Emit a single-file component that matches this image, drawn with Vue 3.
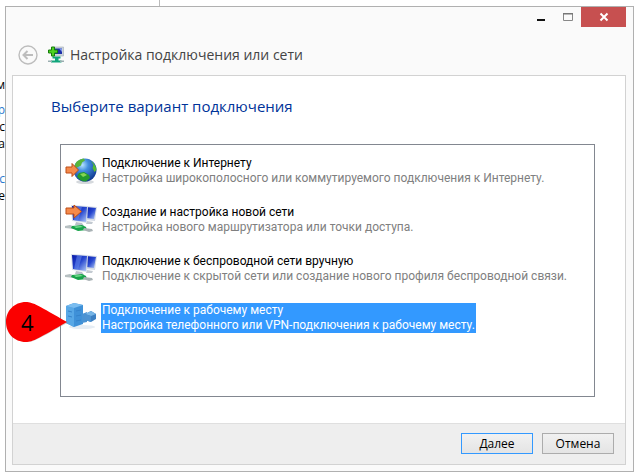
<template>
  <div class="desktop">
    <div class="backdrop" aria-hidden="true">
      <span v-for="(line, i) in backdrop" :key="i" :class="['scrap', line.kind]">{{ line.text }}</span>
    </div>
    <div class="backdrop-line"></div>

    <main class="window">
      <div class="caption">
        <button class="cap-btn" aria-label="Свернуть">
          <svg width="12" height="12" viewBox="0 0 12 12"><path d="M2 8h8v2H2z" fill="#111" /></svg>
        </button>
        <button class="cap-btn" aria-label="Развернуть">
          <svg width="12" height="12" viewBox="0 0 12 12">
            <path d="M1.500 2.500h9v7h-9z" fill="none" stroke="#888" />
            <path d="M1 2h10v1.500H1z" fill="#777" />
          </svg>
        </button>
        <button class="cap-btn close" aria-label="Закрыть">
          <svg width="10" height="10" viewBox="0 0 10 10"><path d="M1.500 1.500l7 7M8.500 1.500l-7 7" stroke="#fff" stroke-width="2" /></svg>
        </button>
      </div>

      <header class="title-row">
        <button class="back" aria-label="Назад">
          <svg width="20" height="20" viewBox="0 0 20 20" fill="none" stroke="#bdbdbd">
            <circle cx="10" cy="10" r="9" stroke-width="1.400" />
            <path d="M15 10H6M9.500 6L5.500 10l4 4" stroke-width="2" />
          </svg>
        </button>
        <svg class="title-icon" width="16" height="18" viewBox="0 0 16 18">
          <path d="M6 1h9.500v9H4V7z" fill="#cdd5dc" stroke="#a3acb5" stroke-width=".6" />
          <path d="M7 2.500h7V8H5V7z" fill="#1d2fa8" />
          <path d="M11 2.500h3V6z" fill="#7d95ea" />
          <path d="M4.500 10.500h8v2h-2v2h3v2H3v-2h4v-2H4.500z" fill="#11a67c" />
          <path d="M0 14.500h4v1.500H0zM12 14.500h4v1.500h-4z" fill="#9aaeb0" />
          <path d="M3.500 1h3v3h3v3h-3v3h-3V7h-3V4h3z" fill="#4ed321" stroke="#167d0c" />
        </svg>
        <h1>Настройка подключения или сети</h1>
      </header>

      <section class="panel">
        <div class="content">
          <h2 id="choice-title">Выберите вариант подключения</h2>
          <div class="list" role="listbox" aria-labelledby="choice-title">
            <button
              v-for="opt in options"
              :key="opt.icon"
              :class="['option', { selected: selected === opt.icon }]"
              role="option"
              :aria-selected="selected === opt.icon"
              @click="selected = opt.icon"
            >
              <svg v-if="opt.icon === 'internet'" class="icon" viewBox="0 0 32 32">
                <defs>
                  <radialGradient id="globe" cx="38%" cy="28%" r="75%">
                    <stop offset="0" stop-color="#b8e4ff" />
                    <stop offset=".35" stop-color="#438fe0" />
                    <stop offset="1" stop-color="#10388f" />
                  </radialGradient>
                </defs>
                <ellipse cx="20" cy="27" rx="9" ry="2" fill="#d5d9dd" />
                <circle cx="20" cy="15" r="11.500" fill="url(#globe)" />
                <path d="M10 10c1-4 5-6 9-6.500l1 2-3 2-1 3-4 2-2 2z" fill="#58b53c" />
                <path d="M26 6c3 2 5 5 5.500 9l-2 2-2-4 1-3z" fill="#55bd31" />
                <path d="M14 18l5-1 5 3 1 3-4 3.500c-4 0-7-2-9-5z" fill="#239a2d" />
                <path d="M15 19l4-1 3 2-4 2z" fill="#86d552" />
                <path d="M1 12h6V8.500L13.500 15 7 21.500V18H1z" fill="#f58a4b" stroke="#bd4d17" />
              </svg>

              <svg v-else-if="opt.icon !== 'work'" class="icon" viewBox="0 0 32 32">
                <defs>
                  <linearGradient :id="'scr-' + opt.icon" x1="0" y1="0" x2="1" y2="1">
                    <stop offset="0" stop-color="#0718a8" />
                    <stop offset=".5" stop-color="#2747cf" />
                    <stop offset="1" stop-color="#b4cdf8" />
                  </linearGradient>
                </defs>
                <path d="M20 2l12 1-2 14-10-1z" fill="#d5dbe5" />
                <path d="M21 3l10 1-2 11-8-1z" :fill="`url(#scr-${opt.icon})`" />
                <path d="M22 17l6 1-1 2h-6z" fill="#c3cad1" />
                <path d="M6 1l17 1-1 17-15-2z" fill="#d9e0e9" />
                <path d="M7 2l15 1-1 15-13-2z" :fill="`url(#scr-${opt.icon})`" />
                <path d="M12 2.300l5 .4-4 14-4-.6z" fill="#6e91f1" opacity=".5" />
                <path d="M11 18l6 1 2 3-9-1z" fill="#b9c1c9" />
                <path d="M0 22l5-1 6 2-2 2-9-1z" fill="#b7c0c2" />
                <path d="M7 22l10-1 4 2 1 3-9 1-7-3z" fill="#17a34a" />
                <path d="M9 22.500l7-.5 2 1-7 1z" fill="#72dc8c" />
                <path d="M19 24l8 1 1 2-4 1-6-2z" fill="#a9b2b5" />
                <path
                  v-if="opt.icon === 'network'"
                  d="M1 4h8V1l7.500 6.500L9 14v-4H1z"
                  fill="#f58a4b"
                  stroke="#bd4d17"
                />
              </svg>

              <svg v-else class="icon" viewBox="0 0 32 32">
                <ellipse cx="17" cy="25" rx="13" ry="2" fill="#e6edf4" />
                <path d="M1 4l8-3 9 2v19l-9 3-8-4z" fill="#3f91d8" />
                <path d="M1 4l8 2v19l-8-4z" fill="#58a8e6" />
                <path d="M1 4l8-3 9 2-9 3z" fill="#7abdf0" />
                <path d="M11 9l5-1M11 14l5-1M11 19l5-1M3 9l4 1M3 14l4 1" stroke="#3583cb" />
                <path d="M17 12l5-2v10l-5 1z" fill="#4a93d4" />
                <path d="M20 12l6-3 5 3v5l-5 3-6-2z" fill="#3d80c2" />
                <path d="M20 12l6-3 5 3-5 2z" fill="#77b5e6" />
                <path d="M20 12l6 2v6l-6-2z" fill="#4d93d2" />
              </svg>

              <span class="text">
                <span class="name">{{ opt.name }}</span>
                <span class="hint">{{ opt.hint }}</span>
              </span>

              <span v-if="opt.icon === 'work'" class="marker">
                <svg viewBox="0 0 64 44">
                  <path d="M22 3C10 3 2 12 2 22s8 19 20 19c7 0 13-4 41-19.500C35 7 29 3 22 3z" fill="#999" opacity=".45" />
                  <path d="M21 1C9 1 1 10 1 21s8 20 20 20c7 0 13-4 41-20C34 5 28 1 21 1z" fill="#fb0000" />
                </svg>
                <span class="marker-num">4</span>
              </span>
            </button>
          </div>
        </div>

        <footer class="actions">
          <button class="btn primary">Далее</button>
          <button class="btn">Отмена</button>
        </footer>
      </section>
    </main>
  </div>
</template>

<script setup>
import { ref } from 'vue'

const selected = ref('work')

const options = [
  {
    icon: 'internet',
    name: 'Подключение к Интернету',
    hint: 'Настройка широкополосного или коммутируемого подключения к Интернету.',
  },
  {
    icon: 'network',
    name: 'Создание и настройка новой сети',
    hint: 'Настройка нового маршрутизатора или точки доступа.',
  },
  {
    icon: 'wireless',
    name: 'Подключение к беспроводной сети вручную',
    hint: 'Подключение к скрытой сети или создание нового профиля беспроводной связи.',
  },
  {
    icon: 'work',
    name: 'Подключение к рабочему месту',
    hint: 'Настройка телефонного или VPN-подключения к рабочему месту.',
  },
]

// ends of the lines showing from under the window
const backdrop = [
  { text: 'м', kind: 'gap' },
  { text: 'р', kind: 'link' },
  { text: 'с', kind: '' },
  { text: 'а', kind: 'gap-lg' },
  { text: 'с', kind: 'link' },
  { text: 'е', kind: '' },
]
</script>

<style>
body {
  margin: 0;
  background: #fff;
}
</style>

<style scoped>
*, *::before, *::after { box-sizing: border-box; }

.desktop {
  position: relative;
  display: flex;
  min-height: 100vh;
  padding: 6px 5px 1px;
  font-family: 'Open Sans', 'Noto Sans', sans-serif;
  font-size: 12px;
  color: #000;
}

button {
  font: inherit;
  color: inherit;
  margin: 0;
  padding: 0;
  border: 0;
  background: none;
  cursor: pointer;
}

svg { display: block; }

/* Backdrop */
.backdrop {
  position: absolute;
  top: 76px;
  left: 0;
  width: 5px;
  display: flex;
  flex-direction: column;
  align-items: flex-end;
  overflow: hidden;
  line-height: 17px;
}
.scrap.gap { margin-bottom: 8px; }
.scrap.gap-lg { margin-bottom: 18px; }
.scrap.link { color: #2a7ad0; }

.backdrop-line {
  position: absolute;
  top: 0;
  left: 159px;
  width: 1px;
  height: 6px;
  background: #bbb;
}

/* Window */
.window {
  position: relative;
  flex: 1;
  min-width: 0;
  display: flex;
  flex-direction: column;
  padding: 0 7px 6px 6px;
  border: 1px solid #b0b0b0;
  background: #fafafa;
}

.caption {
  display: flex;
  justify-content: flex-end;
  height: 20px;
}
.cap-btn {
  display: flex;
  align-items: center;
  justify-content: center;
  width: 27px;
}
.cap-btn.close { width: 45px; background: #c75050; }

.title-row {
  display: flex;
  align-items: center;
  height: 48px;
  padding: 8px 6px 0;
}
.title-icon { margin: 0 6px 0 10px; }
h1 {
  margin: 0;
  font-size: 14px;
  font-weight: 400;
  line-height: 20px;
  color: #444;
}

/* Panel */
.panel {
  flex: 1;
  display: flex;
  flex-direction: column;
  border: 1px solid #d2d2d2;
  background: #fff;
}
.content {
  flex: 1;
  display: flex;
  flex-direction: column;
  padding: 20px 30px 26px 38px;
}
h2 {
  margin: 0 0 28px;
  font-size: 15px;
  font-weight: 400;
  line-height: 20px;
  color: #003399;
}

.list {
  flex: 1;
  display: flex;
  flex-direction: column;
  gap: 19px;
  margin-left: 9px;
  padding: 11px 4px;
  border: 1px solid #828790;
}
.option {
  position: relative;
  display: flex;
  align-items: center;
  gap: 4px;
  height: 30px;
  text-align: left;
}
.icon { width: 32px; height: 32px; flex-shrink: 0; }
.text {
  display: flex;
  flex-direction: column;
  padding: 0 1px;
  font-family: Roboto, 'Open Sans', sans-serif;
  line-height: 15px;
  white-space: nowrap;
}
.hint { color: #808080; }
.selected .text { background: #3399ff; }
.selected .text,
.selected .hint { color: #fff; }

.marker {
  position: absolute;
  left: -60px;
  top: -2px;
  width: 64px;
}
.marker-num {
  position: absolute;
  top: 8px;
  left: 16px;
  font-size: 22px;
  line-height: 26px;
  color: #000;
}

/* Footer */
.actions {
  display: flex;
  justify-content: flex-end;
  gap: 9px;
  padding: 9px 11px 10px;
  border-top: 1px solid #dfdfdf;
  background: #eee;
}
.btn {
  width: 72px;
  height: 21px;
  border: 1px solid #acacac;
  background: linear-gradient(#f1f1f1, #e4e4e4);
  line-height: 18px;
}
.btn.primary { border-color: #3399ff; }
</style>
